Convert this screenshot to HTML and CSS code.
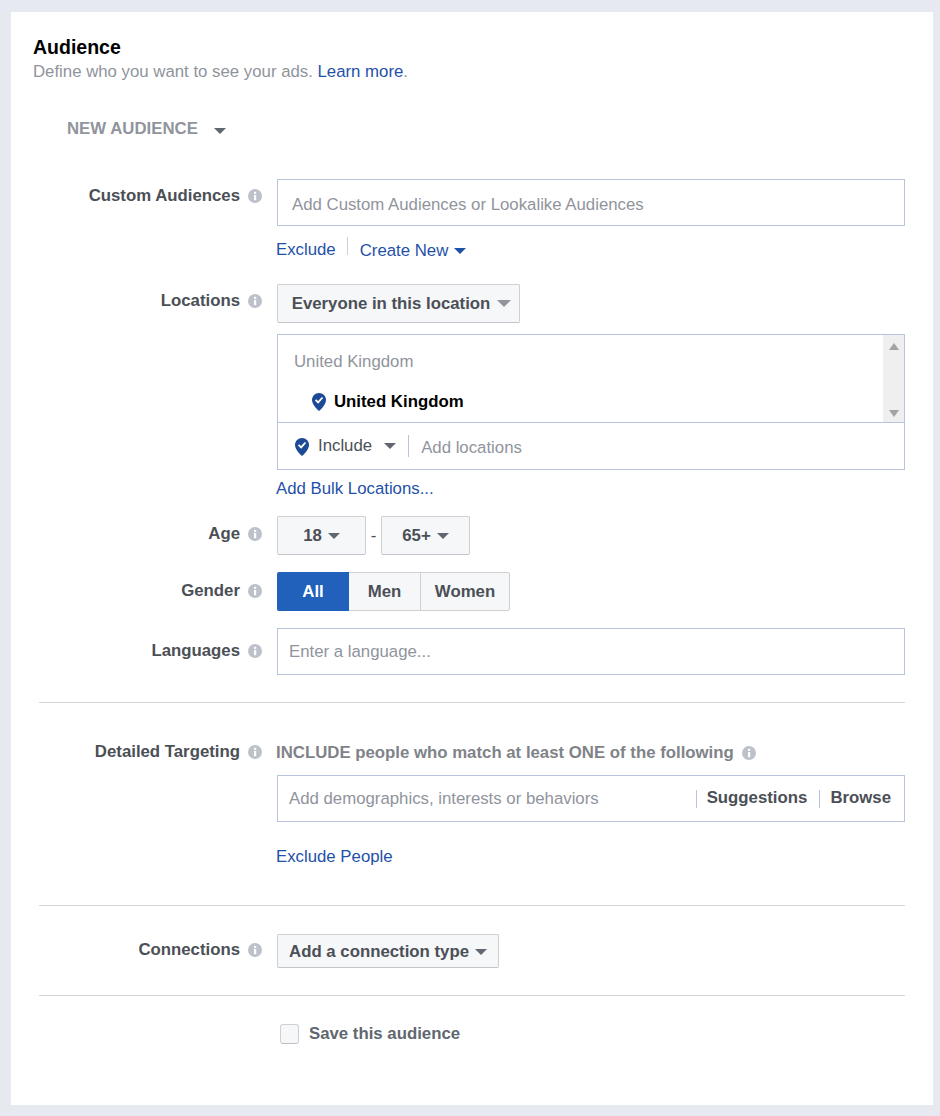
FILE: index.html
```html
<!DOCTYPE html>
<html lang="en">
<head>
<meta charset="utf-8">
<title>Audience</title>
<link rel="stylesheet" href="styles.css">
</head>
<body>
<svg class="defs" width="0" height="0" aria-hidden="true">
  <symbol id="info" viewBox="0 0 14 14">
    <circle cx="7" cy="7" r="7" fill="#bcc1ca"/>
    <rect x="6" y="6" width="2.2" height="5.2" fill="#fff"/>
    <rect x="6" y="2.8" width="2.2" height="2.1" fill="#fff"/>
  </symbol>
  <symbol id="pin" viewBox="0 0 14 18">
    <path d="M7 0C3.100 0 0 3 0 6.800 0 11 4 15.500 7 18c3-2.500 7-7 7-11.200C14 3 10.900 0 7 0z" fill="#1c4a96"/>
    <path d="M3.600 6.800 6.100 9.400 10.500 4.500" fill="none" stroke="#fff" stroke-width="1.800"/>
  </symbol>
</svg>
<main class="card">
  <h1 class="title">Audience</h1>
  <p class="sub">Define who you want to see your ads. <a class="link">Learn more</a>.</p>
  <div class="saved">NEW AUDIENCE <i class="caret caret-slate caret-saved"></i></div>

  <div class="row row-custom">
    <div class="label"><span>Custom Audiences</span><svg class="info"><use href="#info"/></svg></div>
    <div class="field">
      <div class="input input-custom">Add Custom Audiences or Lookalike Audiences</div>
      <div class="links">
        <a class="link">Exclude</a><span class="links-sep"></span><a class="link link-create">Create New <i class="caret caret-blue"></i></a>
      </div>
    </div>
  </div>

  <div class="row row-loc">
    <div class="label"><span>Locations</span><svg class="info"><use href="#info"/></svg></div>
    <div class="field">
      <div class="btn btn-loc">Everyone in this location <i class="caret caret-grey caret-big"></i></div>
      <div class="locbox">
        <div class="loc-list">
          <div class="loc-main">
            <div class="loc-country">United Kingdom</div>
            <div class="loc-item"><svg class="pin"><use href="#pin"/></svg><b>United Kingdom</b></div>
          </div>
          <div class="scroll"><i class="sc-up"></i><i class="sc-down"></i></div>
        </div>
        <div class="loc-add">
          <svg class="pin pin-add"><use href="#pin"/></svg>
          <span class="include">Include</span><i class="caret caret-slate caret-inc"></i>
          <span class="loc-sep"></span>
          <span class="ph">Add locations</span>
        </div>
      </div>
      <a class="link bulk">Add Bulk Locations...</a>
    </div>
  </div>

  <div class="row row-age">
    <div class="label"><span>Age</span><svg class="info"><use href="#info"/></svg></div>
    <div class="field age">
      <div class="btn btn-age">18 <i class="caret caret-slate"></i></div>
      <span class="dash">-</span>
      <div class="btn btn-age">65+ <i class="caret caret-slate"></i></div>
    </div>
  </div>

  <div class="row row-gender">
    <div class="label"><span>Gender</span><svg class="info"><use href="#info"/></svg></div>
    <div class="field">
      <div class="seg">
        <div class="seg-item seg-on">All</div>
        <div class="seg-item seg-men">Men</div>
        <div class="seg-item seg-women">Women</div>
      </div>
    </div>
  </div>

  <div class="row row-lang">
    <div class="label label-lang"><span>Languages</span><svg class="info"><use href="#info"/></svg></div>
    <div class="field">
      <div class="input input-lang">Enter a language...</div>
    </div>
  </div>

  <hr class="rule rule-1">

  <div class="row">
    <div class="label label-flat"><span>Detailed Targeting</span><svg class="info"><use href="#info"/></svg></div>
    <div class="field">
      <div class="match"><span>INCLUDE people who match at least ONE of the following</span><svg class="info info-match"><use href="#info"/></svg></div>
      <div class="input input-detail">
        <span class="detail-ph">Add demographics, interests or behaviors</span>
        <span class="detail-sep"></span><b class="detail-act">Suggestions</b>
        <span class="detail-sep detail-sep-2"></span><b class="detail-act">Browse</b>
      </div>
      <a class="link excl-people">Exclude People</a>
    </div>
  </div>

  <hr class="rule rule-2">

  <div class="row row-conn">
    <div class="label label-conn"><span>Connections</span><svg class="info"><use href="#info"/></svg></div>
    <div class="field">
      <div class="btn btn-conn">Add a connection type <i class="caret caret-slate"></i></div>
    </div>
  </div>

  <hr class="rule rule-3">

  <div class="save"><span class="check"></span><span>Save this audience</span></div>
</main>
</body>
</html>
```
FILE: styles.css
```css
* { box-sizing: border-box; }
html, body { margin: 0; padding: 0; }
body {
  background: #e6e9ef;
  padding: 12px 7px 11px 11px;
  font-family: "Liberation Sans", Arial, sans-serif;
  font-size: 16.8px;
  color: #4b4f56;
}
.defs { position: absolute; }
.card {
  background: #fff;
  height: 1093px;
  padding: 25px 28px 0 22px;
  overflow: hidden;
}
.title { margin: 0; font-size: 19.5px; line-height: 20px; font-weight: 700; color: #000; }
.sub { margin: 5px 0 0; line-height: 20px; color: #90949c; }
.link { color: #1f51a8; text-decoration: none; }
.saved {
  margin: 37px 0 0 34px;
  line-height: 20px; font-weight: 700; color: #90949c;
}
.caret {
  display: inline-block; width: 0; height: 0;
  border-left: 6px solid transparent; border-right: 6px solid transparent;
  border-top: 6px solid #606770;
  vertical-align: 2px;
}
.caret-slate { border-top-color: #606770; }
.caret-blue { border-top-color: #1f51a8; margin-left: 1px; }
.caret-grey { border-top-color: #90949c; }
.caret-big { border-left-width: 7px; border-right-width: 7px; border-top-width: 7px; margin-left: 1px; }
.caret-saved { margin-left: 11px; vertical-align: 0; }
.row { display: flex; align-items: flex-start; }
.label {
  width: 244px; flex: none;
  display: flex; justify-content: flex-end; align-items: center;
  padding-right: 15px; gap: 8px;
  line-height: 20px; font-weight: 700; color: #4b4f56;
}
.info { width: 14px; height: 14px; flex: none; }
.field { flex: 1; min-width: 0; }
.input {
  display: flex; align-items: center;
  border: 1px solid #b8c4dc; background: #fff; height: 47px;
  color: #90949c;
}
.row-custom { margin-top: 40px; }
.row-custom .label { padding-top: 7px; }
.input-custom { padding: 4px 14px 0; }
.links { display: flex; align-items: flex-start; height: 47px; margin-top: 11px; margin-left: -1px; line-height: 26px; }
.links .link { line-height: 26px; margin-top: 0; }
.links-sep { width: 1px; height: 18px; background: #ced0d4; margin: 0 12px 0 11px; }
.links .link-create { margin-top: 1px; }
.btn {
  display: inline-flex; align-items: center; justify-content: center; gap: 6px;
  background: #f6f7f9; border: 1px solid #ced0d4; border-bottom-color: #c2c5cb; border-radius: 2px;
  font-weight: 700; color: #4b4f56;
}
.row-loc .label { padding-top: 7px; }
.btn-loc { width: 243px; height: 39px; display: flex; padding-left: 6px; }
.locbox { margin-top: 11px; border: 1px solid #b8c4dc; height: 136px; }
.loc-list { display: flex; height: 88px; border-bottom: 1px solid #b8c4dc; }
.loc-main { flex: 1; padding: 16px 0 0 16px; }
.loc-country { line-height: 20px; margin-top: 1px; color: #90949c; }
.loc-item { display: flex; align-items: center; margin: 20px 0 0 18px; gap: 8px; line-height: 20px; color: #000; }
.pin { width: 14px; height: 18px; flex: none; }
.scroll {
  width: 21px; background: #efefef; display: flex; flex-direction: column;
  justify-content: space-between; align-items: center; padding: 8px 0 5px;
}
.sc-up, .sc-down { width: 0; height: 0; border-left: 5px solid transparent; border-right: 5px solid transparent; }
.sc-up { border-bottom: 7px solid #a3a3a3; }
.sc-down { border-top: 7px solid #a3a3a3; }
.loc-add { display: flex; align-items: center; height: 46px; padding-left: 17px; }
.pin-add { margin-right: 9px; margin-top: 1px; }
.include { color: #4b4f56; }
.caret-inc { margin-left: 12px; }
.loc-sep { width: 1px; height: 22px; background: #b8c4dc; margin: 0 12px; }
.ph { color: #90949c; margin-top: 3px; }
.bulk { display: block; margin-top: 9px; margin-left: -1px; line-height: 20px; }
.row-age { margin-top: 17px; }
.row-age .label { padding-top: 8px; }
.age { display: flex; align-items: center; }
.btn-age { width: 89px; height: 39px; }
.dash { width: 15px; text-align: center; }
.row-gender { margin-top: 17px; }
.row-gender .label { padding-top: 9px; }
.seg { display: inline-flex; height: 39px; border: 1px solid #ced0d4; border-radius: 2px; background: #f6f7f9; font-weight: 700; }
.seg-item { display: flex; align-items: center; justify-content: center; }
.seg-on { width: 72px; margin: -1px 0 -1px -1px; background: #2160bb; color: #fff; border-radius: 2px 0 0 2px; }
.seg-men { width: 72px; border-right: 1px solid #ced0d4; }
.seg-women { width: 88px; }
.row-lang { margin-top: 17px; }
.row-lang .label { padding-top: 13px; }
.input-lang { padding: 0 11px; }
.rule { border: 0; height: 1px; background: #d4d6da; margin: 0 0 0 6px; }
.rule-1 { margin-top: 27px; margin-bottom: 38px; }
.label-flat { padding-top: 1px; }
.match { display: flex; align-items: center; gap: 8px; height: 20px; margin-top: 2px; margin-left: -1px; font-weight: 700; color: #7f8389; }
.input-detail { margin-top: 12px; padding-left: 11px; color: #90949c; }
.detail-ph { flex: 1; }
.detail-sep { width: 1px; height: 18px; background: #b8c4dc; margin-right: 10px; }
.detail-sep-2 { margin-left: 12px; }
.detail-act { color: #4b4f56; margin-bottom: 2px; }
.detail-act:last-child { margin-right: 13px; }
.excl-people { display: block; margin-top: 25px; margin-left: -1px; line-height: 20px; }
.rule-2 { margin-top: 38px; margin-bottom: 28px; }
.label-conn { padding-top: 6px; }
.btn-conn { width: 222px; height: 34px; padding-top: 1px; }
.rule-3 { margin-top: 27px; margin-bottom: 28px; }
.save { display: flex; align-items: center; gap: 10px; margin-left: 247px; font-weight: 700; color: #606770; }
.check { width: 19px; height: 20px; border: 1px solid #ced0d4; border-bottom-color: #bcc0c6; border-radius: 3px; background: #f6f7f9; }
```
